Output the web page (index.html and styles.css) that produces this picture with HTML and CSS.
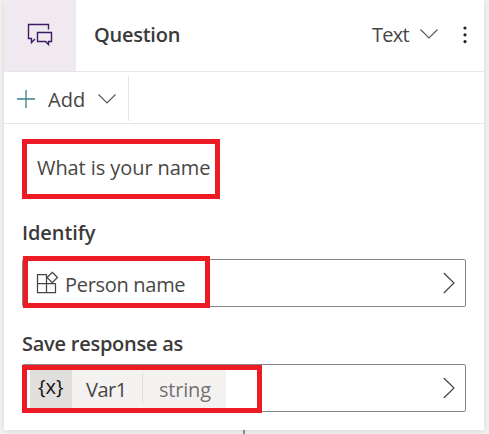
FILE: index.html
```
<!DOCTYPE html>
<html lang="en">
<head>
<meta charset="utf-8">
<title>Question</title>
<link rel="stylesheet" href="styles.css">
</head>
<body>
<main class="card">
  <header class="header">
    <div class="badge">
      <svg width="26" height="24" viewBox="0 0 26 24" fill="none" stroke="#3c1c64" stroke-width="1.4"><path d="M21.5 6.5V1.5H1.5V15.5H4.5V19.5L8 16"/><path d="M10.5 9.5H24.5V18.5H21.5V21.5L18.5 18.5H10.5Z"/></svg>
    </div>
    <h1 class="title">Question</h1>
    <span class="type">Text</span>
    <svg class="type-chevron" width="18" height="10" viewBox="0 0 18 10" fill="none" stroke="#555" stroke-width="1.1"><path d="M.5.5 9 9 17.5.5"/></svg>
    <svg class="more" width="4" height="18" viewBox="0 0 4 18" fill="#222"><circle cx="2" cy="2" r="1.6"/><circle cx="2" cy="8.8" r="1.6"/><circle cx="2" cy="15.6" r="1.6"/></svg>
  </header>
  <div class="toolbar">
    <div class="add">
      <svg width="18" height="18" viewBox="0 0 18 18" fill="none" stroke="#3b7f89" stroke-width="1.3"><path d="M9 0V18M0 9H18"/></svg>
      <span class="add-label">Add</span>
      <svg width="18" height="10" viewBox="0 0 18 10" fill="none" stroke="#555" stroke-width="1.1"><path d="M.5.5 9 9 17.5.5"/></svg>
    </div>
  </div>
  <section class="body">
    <p class="prompt"><span class="prompt-text">What is your name</span></p>
    <h2 class="label identify">Identify</h2>
    <div class="field">
      <svg class="entity" width="24" height="24" viewBox="0 0 24 24" fill="none" stroke="#444" stroke-width="1.25"><path d="M12 4.5H2.5V22.5H20.5V13.5M2.5 13.5H20.5M11.5 4.5V22.5"/><path d="M17.3 2.3 22.5 7.5 17.3 12.7 12.1 7.5Z"/></svg>
      <span class="entity-name">Person name</span>
      <svg class="open" width="12" height="22" viewBox="0 0 12 22" fill="none" stroke="#444" stroke-width="1.2"><path d="M.8 1 11 11 .8 21"/></svg>
      <i class="mark mark-entity"></i>
    </div>
    <h2 class="label save">Save response as</h2>
    <div class="field">
      <div class="variable">
        <span class="symbol">{x}</span>
        <span class="var-name">Var1</span>
        <span class="var-type">string</span>
      </div>
      <svg class="open" width="12" height="22" viewBox="0 0 12 22" fill="none" stroke="#444" stroke-width="1.2"><path d="M.8 1 11 11 .8 21"/></svg>
      <i class="mark mark-variable"></i>
    </div>
  </section>
</main>
<div class="connector"></div>
</body>
</html>
```
FILE: styles.css
```
* { box-sizing: border-box; }
body {
  margin: 0;
  height: 434px;
  overflow: hidden;
  background: #f3f2f1;
  color: #484644;
  font: 20px/30px "Open Sans", "Noto Sans", sans-serif;
}
h1, h2, p { margin: 0; font-size: 20px; }
svg { display: block; flex: none; }
span { white-space: nowrap; }
.card {
  width: 480px;
  height: 430px;
  margin-left: 4px;
  background: #fff;
  box-shadow: 0 1px 6px rgba(0, 0, 0, .12);
}
.header {
  display: flex;
  height: 72px;
  border-bottom: 1px solid #e6e6e5;
}
.badge { width: 72px; padding: 23px 0 0 23px; background: #f0e9f0; }
.title {
  margin: 20px auto 0 18px;
  color: #3b3a39;
  font-weight: 600;
  letter-spacing: -.25px;
}
.type { margin-top: 20px; width: 36px; letter-spacing: -.7px; }
.type-chevron { margin: 29px 0 0 12px; }
.more { margin: 26px 17px 0 25px; }
.toolbar { height: 52px; padding-top: 4px; border-bottom: 1px solid #e6e6e5; }
.add {
  display: flex;
  width: 125px;
  height: 45px;
  align-items: center;
  padding-left: 13px;
  border-right: 1px solid #e6e6e5;
}
.add-label { width: 38px; margin: 2px 12px 0 13px; }
.body { padding: 15px 18px 0; }
.prompt {
  width: 198px;
  height: 60px;
  padding: 9px 10px;
  border: 5px solid #ed1c24;
}
.prompt-text { letter-spacing: -.08px; }
.label { color: #3b3a39; font-weight: 600; letter-spacing: -.25px; }
.identify { margin: 19px 0 11px; letter-spacing: -.1px; }
.save { margin: 22px 0 5px; }
.field {
  position: relative;
  display: flex;
  width: 444px;
  height: 48px;
  border: 1px solid #8a8886;
  border-radius: 2px;
}
.entity { margin: 10px 6px 0 12px; }
.entity-name { margin-top: 10px; letter-spacing: -.3px; }
.open { margin: 12px 10px 0 auto; }
.mark { position: absolute; border: 5px solid #ed1c24; }
.mark-entity { left: 0; top: -4px; width: 187px; height: 52px; }
.mark-variable { left: -1px; top: 0; width: 240px; height: 48px; }
.variable {
  display: flex;
  width: 196px;
  height: 38px;
  margin: 5px 0 0 7px;
  background: #f3f2f1;
}
.symbol {
  width: 42px;
  padding: 2px 0 0 8px;
  background: #e1dfdd;
  color: #111;
}
.var-name {
  width: 71px;
  height: 30px;
  margin-top: 3px;
  padding: 2px 0 0 14px;
  border-right: 1px solid #dddbda;
  letter-spacing: -.5px;
}
.var-type { margin: 5px 0 0 16px; color: #73716f; letter-spacing: -.2px; }
.connector { width: 2px; height: 4px; margin-left: 243px; background: #8a8886; }
```
